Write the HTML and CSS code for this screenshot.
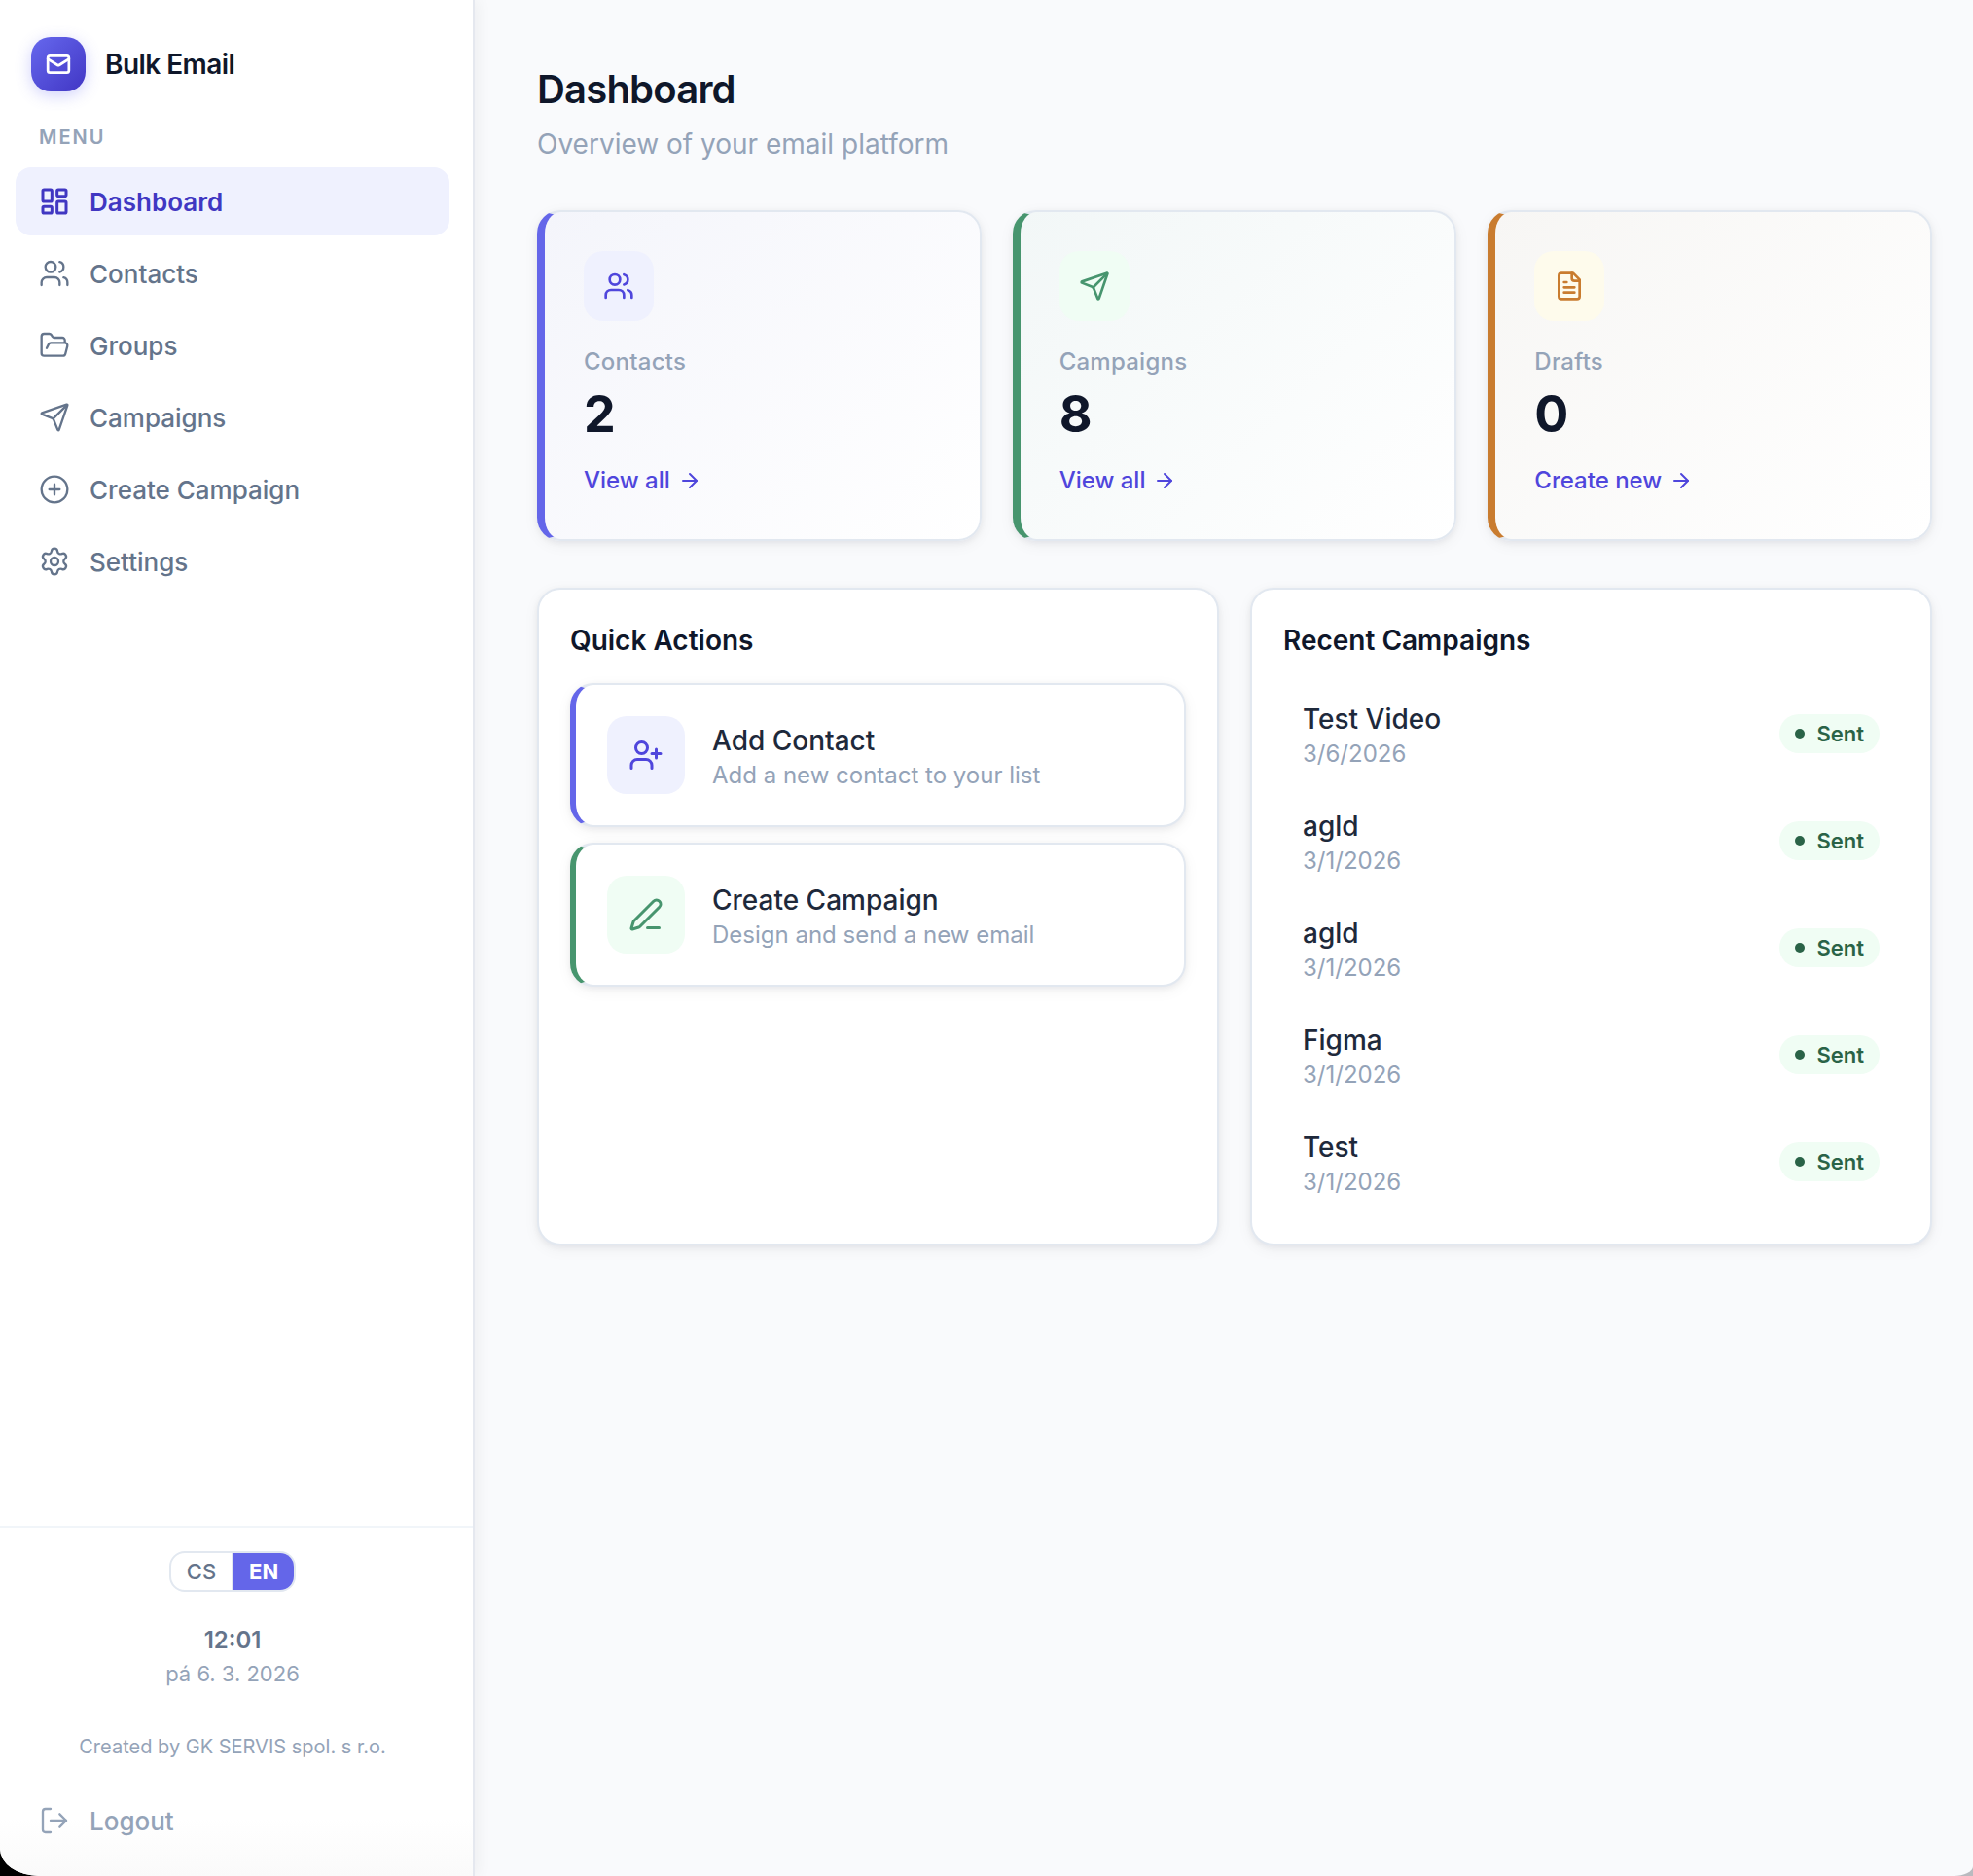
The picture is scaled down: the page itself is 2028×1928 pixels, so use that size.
FILE: index.html
```html
<!DOCTYPE html>
<html lang="en">
<head>
    <meta charset="UTF-8">
    <meta name="viewport" content="width=device-width, initial-scale=1.0">
    <title>Bulk Email - Dashboard</title>
    <link rel="stylesheet" href="styles.css">
</head>
<body>
<!-- icons -->
<svg class="sprite" aria-hidden="true">
    <symbol id="i-mail" viewBox="0 0 24 24"><rect x="2" y="4" width="20" height="16" rx="2"/><path d="m22 7-8.97 5.7a1.94 1.94 0 0 1-2.06 0L2 7"/></symbol>
    <symbol id="i-dashboard" viewBox="0 0 24 24"><rect x="3" y="3" width="7" height="9" rx="1"/><rect x="14" y="3" width="7" height="5" rx="1"/><rect x="14" y="12" width="7" height="9" rx="1"/><rect x="3" y="16" width="7" height="5" rx="1"/></symbol>
    <symbol id="i-users" viewBox="0 0 24 24"><path d="M16 21v-2a4 4 0 0 0-4-4H6a4 4 0 0 0-4 4v2"/><circle cx="9" cy="7" r="4"/><path d="M22 21v-2a4 4 0 0 0-3-3.87"/><path d="M16 3.13a4 4 0 0 1 0 7.75"/></symbol>
    <symbol id="i-folder" viewBox="0 0 24 24"><path d="m6 14 1.5-2.9A2 2 0 0 1 9.24 10H20a2 2 0 0 1 1.94 2.5l-1.54 6a2 2 0 0 1-1.95 1.5H4a2 2 0 0 1-2-2V5a2 2 0 0 1 2-2h3.9a2 2 0 0 1 1.69.9l.81 1.2a2 2 0 0 0 1.67.9H18a2 2 0 0 1 2 2v2"/></symbol>
    <symbol id="i-send" viewBox="0 0 24 24"><path d="M14.536 21.686a.5.5 0 0 0 .937-.024l6.5-19a.496.496 0 0 0-.635-.635l-19 6.5a.5.5 0 0 0-.024.937l7.93 3.18a2 2 0 0 1 1.112 1.11z"/><path d="m21.854 2.147-10.94 10.939"/></symbol>
    <symbol id="i-plus" viewBox="0 0 24 24"><circle cx="12" cy="12" r="10"/><path d="M8 12h8M12 8v8"/></symbol>
    <symbol id="i-settings" viewBox="0 0 24 24"><path d="M9.671 4.136a2.34 2.34 0 0 1 4.659 0 2.34 2.34 0 0 0 3.319 1.915 2.34 2.34 0 0 1 2.33 4.033 2.34 2.34 0 0 0 0 3.831 2.34 2.34 0 0 1-2.33 4.033 2.34 2.34 0 0 0-3.319 1.915 2.34 2.34 0 0 1-4.659 0 2.34 2.34 0 0 0-3.32-1.915 2.34 2.34 0 0 1-2.33-4.033 2.34 2.34 0 0 0 0-3.831A2.34 2.34 0 0 1 6.35 6.051a2.34 2.34 0 0 0 3.319-1.915"/><circle cx="12" cy="12" r="3"/></symbol>
    <symbol id="i-logout" viewBox="0 0 24 24"><path d="M9 21H5a2 2 0 0 1-2-2V5a2 2 0 0 1 2-2h4"/><path d="m16 17 5-5-5-5"/><path d="M21 12H9"/></symbol>
    <symbol id="i-file" viewBox="0 0 24 24"><path d="M15 2H6a2 2 0 0 0-2 2v16a2 2 0 0 0 2 2h12a2 2 0 0 0 2-2V7Z"/><path d="M14 2v4a2 2 0 0 0 2 2h4"/><path d="M10 9H8M16 13H8M16 17H8"/></symbol>
    <symbol id="i-arrow" viewBox="0 0 24 24"><path d="M5 12h14"/><path d="m12 5 7 7-7 7"/></symbol>
    <symbol id="i-user-plus" viewBox="0 0 24 24"><path d="M16 21v-2a4 4 0 0 0-4-4H6a4 4 0 0 0-4 4v2"/><circle cx="9" cy="7" r="4"/><path d="M19 8v6M22 11h-6"/></symbol>
    <symbol id="i-pen" viewBox="0 0 24 24"><path d="M13 21h8"/><path d="M21.174 6.812a1 1 0 0 0-3.986-3.987L3.842 16.174a2 2 0 0 0-.5.83l-1.321 4.352a.5.5 0 0 0 .623.622l4.353-1.32a2 2 0 0 0 .83-.497z"/></symbol>
</svg>

<div class="app">
    <aside class="sidebar">
        <div class="brand">
            <span class="brand-icon"><svg class="icon"><use href="#i-mail"/></svg></span>
            <span class="brand-name">Bulk Email</span>
        </div>
        <div class="menu-label">MENU</div>
        <nav class="menu">
            <a class="menu-item active" href="#"><svg class="icon"><use href="#i-dashboard"/></svg>Dashboard</a>
            <a class="menu-item" href="#"><svg class="icon"><use href="#i-users"/></svg>Contacts</a>
            <a class="menu-item" href="#"><svg class="icon"><use href="#i-folder"/></svg>Groups</a>
            <a class="menu-item" href="#"><svg class="icon"><use href="#i-send"/></svg>Campaigns</a>
            <a class="menu-item" href="#"><svg class="icon"><use href="#i-plus"/></svg>Create Campaign</a>
            <a class="menu-item" href="#"><svg class="icon"><use href="#i-settings"/></svg>Settings</a>
        </nav>
        <div class="sidebar-footer">
            <div class="lang">
                <button type="button">CS</button>
                <button type="button" class="on">EN</button>
            </div>
            <div class="time">12:01</div>
            <div class="date">pá 6. 3. 2026</div>
            <div class="credit">Created by GK SERVIS spol. s r.o.</div>
            <button type="button" class="menu-item logout"><svg class="icon"><use href="#i-logout"/></svg>Logout</button>
        </div>
    </aside>

    <main class="content">
        <h1>Dashboard</h1>
        <p class="subtitle">Overview of your email platform</p>

        <section class="stats">
            <div class="stat purple">
                <span class="stat-icon"><svg class="icon"><use href="#i-users"/></svg></span>
                <div class="stat-label">Contacts</div>
                <div class="stat-value">2</div>
                <a class="stat-link" href="#">View all <svg class="icon"><use href="#i-arrow"/></svg></a>
            </div>
            <div class="stat green">
                <span class="stat-icon"><svg class="icon"><use href="#i-send"/></svg></span>
                <div class="stat-label">Campaigns</div>
                <div class="stat-value">8</div>
                <a class="stat-link" href="#">View all <svg class="icon"><use href="#i-arrow"/></svg></a>
            </div>
            <div class="stat orange">
                <span class="stat-icon"><svg class="icon"><use href="#i-file"/></svg></span>
                <div class="stat-label">Drafts</div>
                <div class="stat-value">0</div>
                <a class="stat-link" href="#">Create new <svg class="icon"><use href="#i-arrow"/></svg></a>
            </div>
        </section>

        <section class="panels">
            <div class="panel">
                <h2>Quick Actions</h2>
                <div class="actions">
                    <a class="action purple" href="#">
                        <span class="action-icon"><svg class="icon"><use href="#i-user-plus"/></svg></span>
                        <span class="info">
                            <span class="info-title">Add Contact</span>
                            <span class="info-sub">Add a new contact to your list</span>
                        </span>
                    </a>
                    <a class="action green" href="#">
                        <span class="action-icon"><svg class="icon"><use href="#i-pen"/></svg></span>
                        <span class="info">
                            <span class="info-title">Create Campaign</span>
                            <span class="info-sub">Design and send a new email</span>
                        </span>
                    </a>
                </div>
            </div>

            <div class="panel">
                <h2>Recent Campaigns</h2>
                <ul class="recent">
                    <li>
                        <span class="info"><span class="info-title">Test Video</span><span class="info-sub">3/6/2026</span></span>
                        <span class="badge">Sent</span>
                    </li>
                    <li>
                        <span class="info"><span class="info-title">agld</span><span class="info-sub">3/1/2026</span></span>
                        <span class="badge">Sent</span>
                    </li>
                    <li>
                        <span class="info"><span class="info-title">agld</span><span class="info-sub">3/1/2026</span></span>
                        <span class="badge">Sent</span>
                    </li>
                    <li>
                        <span class="info"><span class="info-title">Figma</span><span class="info-sub">3/1/2026</span></span>
                        <span class="badge">Sent</span>
                    </li>
                    <li>
                        <span class="info"><span class="info-title">Test</span><span class="info-sub">3/1/2026</span></span>
                        <span class="badge">Sent</span>
                    </li>
                </ul>
            </div>
        </section>
    </main>
</div>
</body>
</html>
```
FILE: styles.css
```css
* {
    box-sizing: border-box;
}
body {
    margin: 0;
    font-family: Inter, "Liberation Sans", sans-serif;
    color: #0f172a;
    background: linear-gradient(90deg, #000 50%, #b9babf 50%);
}
a {
    text-decoration: none;
}
button {
    font-family: inherit;
    border: 0;
    background: none;
    cursor: pointer;
}
.sprite {
    display: none;
}
.icon {
    width: 32px;
    height: 32px;
    flex: none;
    fill: none;
    stroke: currentColor;
    stroke-width: 2;
    stroke-linecap: round;
    stroke-linejoin: round;
}

.app {
    display: flex;
    min-height: 100vh;
    background: #f9fafc;
    border-radius: 0 0 20px 40px / 0 0 10px 28px;
    overflow: hidden;
}

/* sidebar */
.sidebar {
    width: 488px;
    flex: none;
    display: flex;
    flex-direction: column;
    padding-top: 38px;
    background: linear-gradient(#fff calc(100% - 60px), #fafafa);
    border-right: 2px solid #e5e8ef;
    box-shadow: 2px 0 16px rgba(15, 23, 42, 0.06);
}
.brand {
    display: flex;
    align-items: center;
    gap: 20px;
    padding: 0 32px;
}
.brand-icon {
    display: grid;
    place-items: center;
    width: 56px;
    height: 56px;
    border-radius: 20px;
    color: #fff;
    background: linear-gradient(135deg, #6668ee, #4136c4);
    box-shadow: 0 4px 16px rgba(99, 102, 241, 0.3);
}
.brand-icon .icon {
    width: 26px;
    height: 26px;
    stroke-width: 2.5;
}
.brand-name {
    font-size: 28px;
    font-weight: 600;
    letter-spacing: -0.02em;
}
.menu-label {
    padding: 0 40px;
    margin: 32px 0 16px;
    font-size: 20px;
    line-height: 30px;
    font-weight: 600;
    letter-spacing: 0.1em;
    color: #94a3b8;
}
.menu {
    display: flex;
    flex-direction: column;
    gap: 4px;
    padding: 0 24px 0 16px;
}
.menu-item {
    display: flex;
    align-items: center;
    gap: 20px;
    height: 70px;
    padding: 0 24px;
    border-radius: 16px;
    font-size: 26px;
    font-weight: 500;
    color: #64748b;
}
.menu-item .icon {
    stroke-width: 1.75;
}
.menu-item.active {
    font-weight: 600;
    color: #4037c2;
    background: #eff1fe;
}
.menu-item.active .icon {
    stroke-width: 2.25;
}
.sidebar-footer {
    margin-top: auto;
    padding: 24px 24px 22px 16px;
    border-top: 2px solid #f1f5f9;
    text-align: center;
}
.lang {
    display: flex;
    width: fit-content;
    margin: 0 auto 32px;
    border: 2px solid #e2e8f0;
    border-radius: 16px;
    overflow: hidden;
}
.lang button {
    height: 38px;
    padding: 0 16px;
    font-size: 22px;
    font-weight: 500;
    color: #64748b;
}
.lang .on {
    font-weight: 700;
    color: #fff;
    background: #6466e9;
    border-left: 2px solid #e2e8f0;
}
.time {
    font-size: 24px;
    line-height: 36px;
    font-weight: 600;
    color: #64748b;
}
.date {
    font-size: 22px;
    line-height: 32px;
    color: #94a3b8;
}
.credit {
    margin: 44px 0 26px;
    font-size: 20px;
    line-height: 30px;
    color: #94a3b8;
}
.logout {
    width: 100%;
    color: #94a3b8;
}

/* content */
.content {
    flex: 1;
    padding: 64px 42px 64px 64px;
}
h1 {
    margin: 0;
    font-size: 40px;
    line-height: 56px;
    font-weight: 600;
    letter-spacing: -0.02em;
}
.subtitle {
    margin: 8px 0 48px;
    font-size: 28px;
    line-height: 40px;
    color: #94a3b8;
}
.stats {
    display: grid;
    grid-template-columns: repeat(3, 1fr);
    gap: 32px;
}
.stat,
.panel,
.action {
    border: 2px solid #e2e8f0;
    border-radius: 24px;
    background: #fff;
    box-shadow: 0 2px 6px rgba(15, 23, 42, 0.06), 0 4px 16px rgba(15, 23, 42, 0.05);
}
.stat {
    padding: 40px;
    border-left-width: 8px;
}
.stat-icon,
.action-icon {
    display: grid;
    place-items: center;
    width: 72px;
    height: 72px;
    border-radius: 20px;
}
.purple {
    border-left-color: #6466e9;
}
.green {
    border-left-color: #47956e;
}
.orange {
    border-left-color: #c97c2f;
}
.stat.purple {
    background: linear-gradient(135deg, #f4f5fb, #fff);
}
.stat.green {
    background: linear-gradient(135deg, #f2f7f7, #fff);
}
.stat.orange {
    background: linear-gradient(135deg, #f7f6f4, #fff);
}
.purple .stat-icon,
.purple .action-icon {
    color: #4f46dc;
    background: #eff1fe;
}
.green .stat-icon,
.green .action-icon {
    color: #47956e;
    background: #f0fdf4;
}
.orange .stat-icon {
    color: #c97c2f;
    background: #fefbec;
}
.stat-label {
    margin-top: 24px;
    font-size: 24px;
    line-height: 36px;
    font-weight: 500;
    letter-spacing: 0.01em;
    color: #94a3b8;
}
.stat-value {
    margin: 8px 0 20px;
    font-size: 52px;
    line-height: 56px;
    font-weight: 700;
}
.stat-link {
    display: flex;
    align-items: center;
    gap: 8px;
    width: fit-content;
    font-size: 24px;
    line-height: 40px;
    font-weight: 500;
    color: #4f46dc;
}
.stat-link .icon {
    width: 24px;
    height: 24px;
}

/* panels */
.panels {
    display: grid;
    grid-template-columns: 1fr 1fr;
    gap: 32px;
    margin-top: 48px;
}
.panel {
    padding: 32px;
}
h2 {
    margin: 0 0 24px;
    font-size: 28px;
    line-height: 40px;
    font-weight: 600;
}
.actions {
    display: flex;
    flex-direction: column;
    gap: 16px;
}
.action {
    display: flex;
    align-items: center;
    gap: 28px;
    padding: 32px;
    border-left-width: 6px;
}
.action-icon {
    width: 80px;
    height: 80px;
}
.action-icon .icon {
    width: 36px;
    height: 36px;
}
.info {
    display: flex;
    flex-direction: column;
}
.info-title {
    font-size: 28px;
    line-height: 42px;
    font-weight: 500;
    color: #1e293b;
}
.info-sub {
    font-size: 24px;
    line-height: 30px;
    color: #94a3b8;
}
.recent {
    display: flex;
    flex-direction: column;
    gap: 6px;
    margin: 0;
    padding: 0;
    list-style: none;
}
.recent li {
    display: flex;
    align-items: center;
    justify-content: space-between;
    padding: 16px 20px;
}
.badge {
    display: flex;
    align-items: center;
    gap: 12px;
    padding: 0 16px;
    border-radius: 20px;
    font-size: 22px;
    line-height: 40px;
    font-weight: 600;
    color: #2a6347;
    background: #f0fdf4;
}
.badge::before {
    content: "";
    width: 10px;
    height: 10px;
    border-radius: 50%;
    background: currentColor;
}
```
